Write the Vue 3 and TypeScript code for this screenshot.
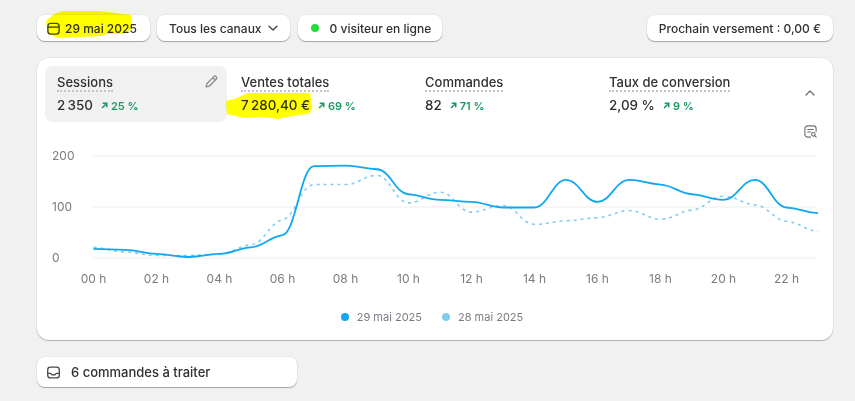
<template>
  <div class="page">
    <div class="top-bar">
      <button class="pill date-pill">
        <svg class="ico" viewBox="0 0 16 16" width="15" height="15" fill="none" stroke="#4a4a4a" stroke-width="1.5">
          <rect x="2" y="2.5" width="12" height="11.5" rx="3" />
          <path d="M2 6.5h12" />
        </svg>
        29 mai 2025
      </button>
      <button class="pill canal-pill">
        Tous les canaux
        <svg viewBox="0 0 12 12" width="12" height="12" fill="none" stroke="#4a4a4a" stroke-width="1.5" stroke-linecap="round" stroke-linejoin="round">
          <path d="M2 4.2 6 8l4-3.8" />
        </svg>
      </button>
      <button class="pill live-pill">
        <span class="live-dot"></span>
        0 visiteur en ligne
      </button>
      <button class="pill payout">Prochain versement : 0,00 €</button>
    </div>

    <section class="card">
      <div class="metrics">
        <div v-for="(m, i) in metrics" :key="m.label" class="metric" :class="{ active: i === 0 }">
          <div class="metric-head">
            <span class="metric-label">{{ m.label }}</span>
            <svg v-if="i === 0" class="pencil" viewBox="0 0 16 16" width="15" height="15" fill="none" stroke="#8a8a8a" stroke-width="1.4" stroke-linejoin="round">
              <path d="M2.3 13.7 3 10.4 10.6 2.8a1.7 1.7 0 0 1 2.5 2.5L5.6 13z" />
              <path d="m9.5 4 2.5 2.5" />
            </svg>
          </div>
          <div class="metric-row">
            <span class="metric-value">{{ m.value }}</span>
            <span class="metric-delta">
              <svg viewBox="0 0 10 10" width="9" height="9" fill="none" stroke="#1a9a62" stroke-width="1.7">
                <path d="M3 2.5h4.5V7M7.3 2.7 2.3 7.7" />
              </svg>
              {{ m.delta }}
            </span>
          </div>
        </div>
        <svg class="collapse" viewBox="0 0 12 12" width="12" height="12" fill="none" stroke="#6b6b6b" stroke-width="1.3" stroke-linecap="round" stroke-linejoin="round">
          <path d="M2 8 6 4l4 4" />
        </svg>
      </div>

      <div class="chart-tools">
        <svg viewBox="0 0 16 16" width="15" height="15" fill="none" stroke="#707070" stroke-width="1.2" stroke-linecap="round">
          <path d="M8 14H5a3 3 0 0 1-3-3V5a3 3 0 0 1 3-3h6a3 3 0 0 1 3 3v3" />
          <path d="M5 5.8h6M5 8.5h3" />
          <circle cx="11" cy="11" r="1.9" />
          <path d="m12.5 12.5 1.6 1.6" />
        </svg>
      </div>

      <svg class="chart" width="796" height="150" viewBox="0 0 796 150">
        <line v-for="t in yTicks" :key="t" x1="56" x2="780" :y1="toY(t)" :y2="toY(t)" class="grid-line" />
        <text v-for="t in yTicks" :key="'y' + t" x="15" :y="toY(t) + 4" class="axis-text">{{ t }}</text>
        <text v-for="h in xTicks" :key="h" :x="toX(h)" y="138" text-anchor="middle" class="axis-text">{{ hourLabel(h) }}</text>
        <path :d="previousPath" class="line-previous" />
        <path :d="currentPath" class="line-current" />
      </svg>

      <div class="legend">
        <span class="legend-item"><i class="swatch current"></i>29 mai 2025</span>
        <span class="legend-item"><i class="swatch previous"></i>28 mai 2025</span>
      </div>
    </section>

    <button class="pill orders">
      <svg viewBox="0 0 16 16" width="15" height="15" fill="none" stroke="#4a4a4a" stroke-width="1.4" stroke-linejoin="round">
        <rect x="1.8" y="2.2" width="12.4" height="11.6" rx="3" />
        <path d="M2 9h2.8c.6 0 .9.9 1.4 1.3.5.3 3.1.3 3.6 0 .5-.4.8-1.3 1.4-1.3H14" />
      </svg>
      6 commandes à traiter
    </button>

    <svg class="marker" width="855" height="401" viewBox="0 0 855 401">
      <path d="M46 21 54 14 63 11 99 11 131 15 132 29 123 34 106 34 103 36 59 38 48 34Z" />
      <path d="M226 101 237 98 247 93 310 93 312 108 309 114 298 115 287 117 278 119 263 117 245 118 227 114Z" />
    </svg>
  </div>
</template>

<script setup lang="ts">
const metrics = [
  { label: "Sessions", value: "2\u202f350", delta: "25 %" },
  { label: "Ventes totales", value: "7\u202f280,40 €", delta: "69 %" },
  { label: "Commandes", value: "82", delta: "71 %" },
  { label: "Taux de conversion", value: "2,09 %", delta: "9 %" }
];

const current = [18, 16, 8, 2, 8, 21, 45, 180, 181, 174, 125, 114, 110, 99, 99, 153, 110, 153, 144, 125, 114, 153, 99, 88];
const previous = [21, 12, 5, 5, 8, 26, 75, 144, 144, 162, 108, 129, 90, 103, 66, 73, 79, 93, 76, 94, 121, 104, 72, 52];

const yTicks = [0, 100, 200];
const xTicks = Array.from({ length: 12 }, (_, i) => i * 2);

const toX = (hour: number) => 56.5 + hour * 31.5;
const toY = (value: number) => 113 - value * 0.51;
const hourLabel = (hour: number) => `${String(hour).padStart(2, "0")} h`;

// flat-ish tangents and long handles: the reference line steps from hour to hour
const buildPath = (values: number[]) => {
  const pts = values.map((v, i) => [toX(i), toY(v)]);
  const slopes = pts.slice(1).map((p, i) => (p[1] - pts[i][1]) / (p[0] - pts[i][0]));
  const tangents = pts.map((_, i) => {
    if (i === 0) return slopes[0] * 0.3;
    if (i === pts.length - 1) return slopes[i - 1] * 0.3;
    const a = slopes[i - 1];
    const b = slopes[i];
    if (a * b <= 0) return 0;
    return Math.sign(a) * 0.3 * Math.min(Math.abs(a), Math.abs(b));
  });
  let d = `M${pts[0][0]} ${pts[0][1]}`;
  for (let i = 1; i < pts.length; i++) {
    const h = (pts[i][0] - pts[i - 1][0]) * 0.42;
    const c1y = pts[i - 1][1] + tangents[i - 1] * h;
    const c2y = pts[i][1] - tangents[i] * h;
    d += `C${pts[i - 1][0] + h} ${c1y} ${pts[i][0] - h} ${c2y} ${pts[i][0]} ${pts[i][1]}`;
  }
  return d;
};

const currentPath = buildPath(current);
const previousPath = buildPath(previous);
</script>

<style>
html,
body {
  background: #f1f1f1;
}
</style>

<style scoped>
.page {
  position: relative;
  box-sizing: border-box;
  width: 855px;
  height: 401px;
  overflow: hidden;
  padding: 15px 22px 0 37px;
  font-family: Inter, "Liberation Sans", sans-serif;
  color: #303030;
}

.top-bar {
  display: flex;
  gap: 7px;
}

.pill {
  display: flex;
  align-items: center;
  gap: 6px;
  height: 26px;
  padding: 0 12px;
  border: 0;
  border-radius: 8px;
  background: #fff;
  box-shadow: 0 1px 1px rgba(0, 0, 0, 0.3), 0 0 0 1px rgba(0, 0, 0, 0.03);
  font: 500 12px Inter, "Liberation Sans", sans-serif;
  color: #303030;
  white-space: nowrap;
}

.date-pill {
  width: 113px;
  padding: 0 0 0 9px;
  gap: 4px;
}

.canal-pill {
  gap: 5px;
  padding-right: 11px;
}

.live-pill {
  margin-left: 1px;
  gap: 11px;
  padding: 0 11px 0 13px;
}

.live-dot {
  width: 8px;
  height: 8px;
  border-radius: 50%;
  background: #22dd3a;
}

.payout {
  margin-left: auto;
}

.card {
  margin-top: 17px;
  height: 282px;
  border-radius: 12px;
  background: #fff;
  box-shadow: 0 1px 1px rgba(0, 0, 0, 0.25), 0 0 0 1px rgba(0, 0, 0, 0.03);
  overflow: hidden;
}

.metrics {
  position: relative;
  display: flex;
  gap: 2px;
  padding: 8px 8px 0;
}

.metric {
  box-sizing: border-box;
  width: 182px;
  height: 56px;
  padding: 8px 12px;
  border-radius: 8px;
}

.metric.active {
  background: #f1f1f1;
}

.metric-head {
  display: flex;
  justify-content: space-between;
  align-items: flex-start;
}

.metric-label {
  font-size: 13px;
  font-weight: 500;
  line-height: 16px;
  border-bottom: 2px dotted #c4c4c4;
}

.pencil {
  margin: 0 -4px 0 0;
}

.metric-row {
  display: flex;
  align-items: center;
  gap: 7px;
  margin-top: 5px;
}

.metric-value {
  font-size: 13.4px;
  font-weight: 500;
  line-height: 17px;
  white-space: nowrap;
}

.metric-delta {
  display: flex;
  align-items: center;
  gap: 2px;
  font-size: 11px;
  font-weight: 600;
  color: #1a9a62;
}

.collapse {
  position: absolute;
  top: 29px;
  right: 17px;
}

.chart-tools {
  display: flex;
  justify-content: flex-end;
  height: 21px;
  padding: 2px 15px 0 0;
}

.chart {
  display: block;
}

.grid-line {
  stroke: #f3f3f3;
  stroke-width: 1.5;
}

.axis-text {
  font: 400 12px Inter, "Liberation Sans", sans-serif;
  fill: #7a7a82;
}

.line-current {
  fill: none;
  stroke: #10a8f2;
  stroke-width: 1.8;
}

.line-previous {
  fill: none;
  stroke: #82cdee;
  stroke-width: 1.6;
  stroke-dasharray: 3 4;
}

.legend {
  display: flex;
  justify-content: center;
  gap: 20px;
  margin: 14px 6px 0 0;
  font-size: 11px;
  line-height: 16px;
  color: #7a7a82;
}

.legend-item {
  display: flex;
  align-items: center;
  gap: 8px;
}

.swatch {
  width: 8px;
  height: 8px;
  border-radius: 50%;
}

.swatch.current {
  background: #10a8f2;
}

.swatch.previous {
  background: #82cdee;
}

.orders {
  margin-top: 17px;
  width: 260px;
  height: 30px;
  padding: 0 0 0 9px;
  gap: 10px;
  font-size: 13px;
}

.marker {
  position: absolute;
  inset: 0;
  pointer-events: none;
  mix-blend-mode: multiply;
  fill: #ffff00;
}
</style>
